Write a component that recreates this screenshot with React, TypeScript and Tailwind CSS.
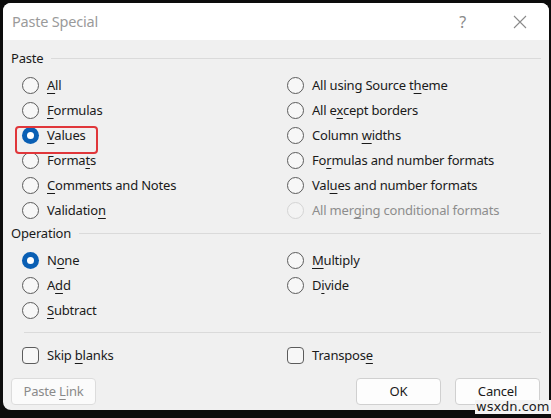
import type { ReactNode } from 'react'

const font = { fontFamily: '"Noto Sans", "Open Sans", sans-serif' }

// Letter with an access-key underline
function Key({ children }: { children: ReactNode }) {
  return <span className="underline decoration-1 underline-offset-[3px]">{children}</span>
}

function Radio({ checked, disabled, children }: { checked?: boolean; disabled?: boolean; children: ReactNode }) {
  return (
    <div className="flex h-[25px] items-center gap-[8px]">
      {checked ? (
        <span className="flex h-[17px] w-[17px] items-center justify-center rounded-full bg-[#0a5fb4]">
          <span className="h-[7px] w-[7px] rounded-full bg-white" />
        </span>
      ) : (
        <span
          className={
            disabled
              ? 'h-[17px] w-[17px] rounded-full border border-[#d4d4d4] bg-[#f3f3f3]'
              : 'h-[17px] w-[17px] rounded-full border border-[#5c5c5c] bg-[#f7f7f7]'
          }
        />
      )}
      <span className={disabled ? 'text-[#8d8d8d]' : 'text-[#1a1a1a]'}>{children}</span>
    </div>
  )
}

function Checkbox({ children }: { children: ReactNode }) {
  return (
    <div className="flex h-[25px] items-center gap-[8px]">
      <span className="h-[17px] w-[17px] rounded-[4px] border border-[#5c5c5c] bg-[#f7f7f7]" />
      <span className="text-[#1a1a1a]">{children}</span>
    </div>
  )
}

function GroupLabel({ children }: { children: ReactNode }) {
  return (
    <div className="flex h-[20px] items-center">
      <span className="text-[#1a1a1a]">{children}</span>
      <span className="ml-[8px] mr-[8px] h-px flex-1 bg-[#dadada]" />
    </div>
  )
}

function Button({ muted, children }: { muted?: boolean; children: ReactNode }) {
  return (
    <button
      className={
        muted
          ? 'flex h-[27px] w-[85px] items-center justify-center rounded-[4px] border border-[#dcdcdc] bg-[#fbfbfb] text-[#8a8a8a]'
          : 'flex h-[27px] w-[85px] items-center justify-center rounded-[4px] border border-[#d0d0d0] bg-[#fdfdfd] text-[#1a1a1a]'
      }
    >
      <span>{children}</span>
    </button>
  )
}

export default function App() {
  return (
    <div className="relative h-[418px] w-[551px] overflow-hidden bg-[#0c0c0c] pl-[3px] pr-[2px] pt-[3px]" style={font}>
      <div className="flex h-[407px] flex-col overflow-hidden rounded-[8px] bg-[#f0f0f0] text-[13px] leading-none tracking-[-0.2px]">
        {/* title bar */}
        <div className="flex h-[37px] items-center justify-between bg-white pl-[9px] pr-[22px]">
          <span className="text-[14.5px] text-[#9a9a9a]">Paste Special</span>
          <div className="flex items-center gap-[47px] text-[#8a8a8a]">
            <span className="text-[16px]">?</span>
            <svg width="14" height="14" viewBox="0 0 14 14" fill="none" stroke="#8a8a8a" strokeWidth="1.1">
              <path d="M1 1L13 13M13 1L1 13" />
            </svg>
          </div>
        </div>

        <div className="flex flex-1 flex-col pl-[8px] pt-[8px]">
          <GroupLabel>Paste</GroupLabel>
          <div className="mt-[5px] grid grid-cols-[265px_1fr] pl-[11px]">
            <div className="relative flex flex-col">
              <Radio><Key>A</Key>ll</Radio>
              <Radio><Key>F</Key>ormulas</Radio>
              <Radio checked><Key>V</Key>alues</Radio>
              <Radio>Forma<Key>t</Key>s</Radio>
              <Radio><Key>C</Key>omments and Notes</Radio>
              <Radio>Validatio<Key>n</Key></Radio>
              <span className="absolute left-[-7px] top-[53px] h-[28px] w-[83px] rounded-[4px] border-2 border-[#e0363a]" />
            </div>
            <div className="flex flex-col">
              <Radio>All using Source t<Key>h</Key>eme</Radio>
              <Radio>All e<Key>x</Key>cept borders</Radio>
              <Radio>Column <Key>w</Key>idths</Radio>
              <Radio>Fo<Key>r</Key>mulas and number formats</Radio>
              <Radio>Val<Key>u</Key>es and number formats</Radio>
              <Radio disabled>All mer<Key>g</Key>ing conditional formats</Radio>
            </div>
          </div>

          <GroupLabel>Operation</GroupLabel>
          <div className="mt-[5px] grid grid-cols-[265px_1fr] pl-[11px]">
            <div className="flex flex-col">
              <Radio checked>N<Key>o</Key>ne</Radio>
              <Radio>A<Key>d</Key>d</Radio>
              <Radio><Key>S</Key>ubtract</Radio>
            </div>
            <div className="flex flex-col">
              <Radio><Key>M</Key>ultiply</Radio>
              <Radio>D<Key>i</Key>vide</Radio>
            </div>
          </div>

          <div className="ml-[13px] mr-[8px] mt-[9px] h-px bg-[#dadada]" />

          <div className="mt-[10px] grid grid-cols-[265px_1fr] pl-[11px]">
            <Checkbox>Skip <Key>b</Key>lanks</Checkbox>
            <Checkbox>Transpos<Key>e</Key></Checkbox>
          </div>

          <div className="mt-[10px] flex items-center pr-[9px]">
            <Button muted>Paste <Key>L</Key>ink</Button>
            <div className="ml-auto flex gap-[14px]">
              <Button>OK</Button>
              <Button>Cancel</Button>
            </div>
          </div>
        </div>
      </div>
      <span
        className="absolute left-[475px] top-[400px] bg-[#f4f4f4] px-[1px] text-[13px] leading-[14px] text-[#1e1e1e]"
        style={{ fontFamily: '"DejaVu Sans", sans-serif' }}
      >
        wsxdn.com
      </span>
    </div>
  )
}
